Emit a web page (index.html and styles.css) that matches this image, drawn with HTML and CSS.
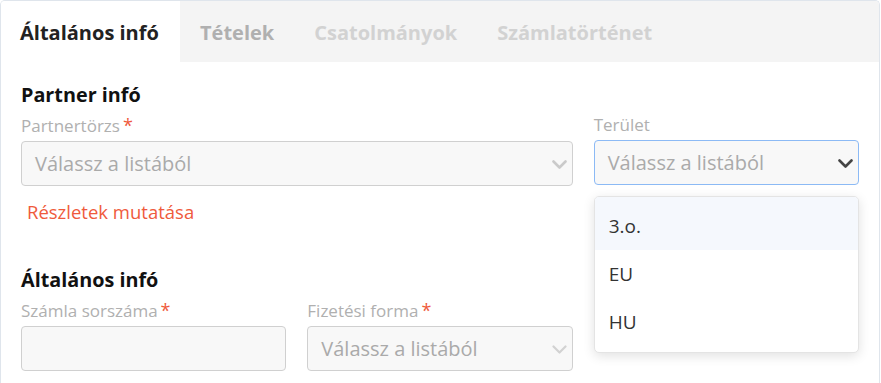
FILE: index.html
```html
<!DOCTYPE html>
<html lang="hu">
<head>
<meta charset="utf-8">
<link rel="stylesheet" href="styles.css">
</head>
<body>
<div class="card">
  <div class="tabs">
    <div class="tab active">Általános infó</div>
    <div class="tab mid">Tételek</div>
    <div class="tab faint">Csatolmányok</div>
    <div class="tab faint">Számlatörténet</div>
  </div>
  <div class="content">
    <h2 class="section-title">Partner infó</h2>
    <div class="grid">
      <div class="field span2">
        <label class="label">Partnertörzs<span class="req">*</span></label>
        <div class="select disabled">
          <span class="placeholder">Válassz a listából</span>
          <svg class="chev" width="15" height="9" viewBox="0 0 15 9"><path d="M1.5 1.5 L7.5 7.5 L13.5 1.5" fill="none" stroke="#cacaca" stroke-width="2.6" stroke-linecap="round" stroke-linejoin="round"/></svg>
        </div>
      </div>
      <div class="field with-menu">
        <label class="label">Terület</label>
        <div class="select focused">
          <span class="placeholder">Válassz a listából</span>
          <svg class="chev" width="15" height="9" viewBox="0 0 15 9"><path d="M1.5 1.5 L7.5 7.5 L13.5 1.5" fill="none" stroke="#444" stroke-width="2.6" stroke-linecap="round" stroke-linejoin="round"/></svg>
        </div>
        <ul class="menu">
          <li class="item first hover">3.o.</li>
          <li class="item">EU</li>
          <li class="item">HU</li>
        </ul>
      </div>
    </div>
    <a class="details-link">Részletek mutatása</a>
    <h2 class="section-title second">Általános infó</h2>
    <div class="grid">
      <div class="field">
        <label class="label">Számla sorszáma<span class="req">*</span></label>
        <div class="select disabled"></div>
      </div>
      <div class="field">
        <label class="label">Fizetési forma<span class="req">*</span></label>
        <div class="select disabled">
          <span class="placeholder">Válassz a listából</span>
          <svg class="chev" width="15" height="9" viewBox="0 0 15 9"><path d="M1.5 1.5 L7.5 7.5 L13.5 1.5" fill="none" stroke="#d2d2d2" stroke-width="2.2" stroke-linecap="round" stroke-linejoin="round"/></svg>
        </div>
      </div>
      <div class="field"></div>
    </div>
  </div>
</div>
</body>
</html>
```

FILE: styles.css
```css
* { box-sizing: border-box; }
html, body { margin: 0; padding: 0; background: #fff; }
body {
  font-family: "Open Sans", "Noto Sans", sans-serif;
  color: #222;
  width: 881px;
  height: 383px;
  overflow: hidden;
}
.card {
  width: 880px;
  border: 1px solid #dfe5ec;
  border-radius: 5px 5px 0 0;
  border-bottom: none;
  min-height: 420px;
}
.tabs {
  display: flex;
  height: 61px;
  background: #f4f4f4;
  border-radius: 4px 4px 0 0;
}
.tab {
  padding: 2px 20px 0 20px;
  display: flex;
  align-items: center;
  font-size: 20px;
  font-weight: 700;
  color: #d4d4d4;
  white-space: nowrap;
}
.tab.active { background: #fff; color: #222; width: 179px; padding-left: 19px; padding-right: 0; border-radius: 4px 0 0 0; }
.tab.mid { color: #b0b0b0; }
.tab.faint { color: #d2d2d2; }
.content { padding: 19px 20px 0 20px; }
.section-title {
  margin: 0;
  font-size: 19.8px;
  font-weight: 700;
  color: #111;
  line-height: 28px;
}
.section-title.second { margin-top: 41px; }
.grid {
  display: grid;
  grid-template-columns: repeat(3, 1fr);
  column-gap: 21px;
}
.span2 { grid-column: span 2; }
.field { position: relative; }
.label {
  display: block;
  font-size: 17px;
  line-height: 24px;
  color: #b0b0b0;
  margin: 4px 0 3px 0;
}
.req { color: #ef5a3c; margin-left: 3px; font-size: 18px; }
.select {
  height: 45px;
  border: 1px solid #d0d0d0;
  border-radius: 4px;
  background: #f8f8f8;
  display: flex;
  align-items: center;
  justify-content: space-between;
  padding: 0 5px 0 13px;
}
.select.focused { border-color: #8cbaf5; }
.placeholder { font-size: 20px; color: #aaa; padding-bottom: 1px; white-space: nowrap; }
.chev { flex: none; margin-top: 2px; }
.details-link {
  display: block;
  margin: 13px 0 0 6px;
  font-size: 18.5px;
  line-height: 26px;
  color: #ef5a3c;
}
.menu {
  position: absolute;
  left: 0;
  right: 0;
  top: 87px;
  margin: 0;
  padding: 0 0 6px 0;
  list-style: none;
  background: #fff;
  border: 1px solid #e4e4e4;
  border-radius: 5px;
  box-shadow: 0 3px 12px rgba(0,0,0,0.12);
  z-index: 5;
  overflow: hidden;
}
.item {
  height: 48px;
  display: flex;
  align-items: center;
  padding-left: 14px;
  font-size: 19px;
  color: #333;
}
.item.first { height: 53px; padding-top: 4px; }
.item.hover { background: #f5f8fd; }
```
